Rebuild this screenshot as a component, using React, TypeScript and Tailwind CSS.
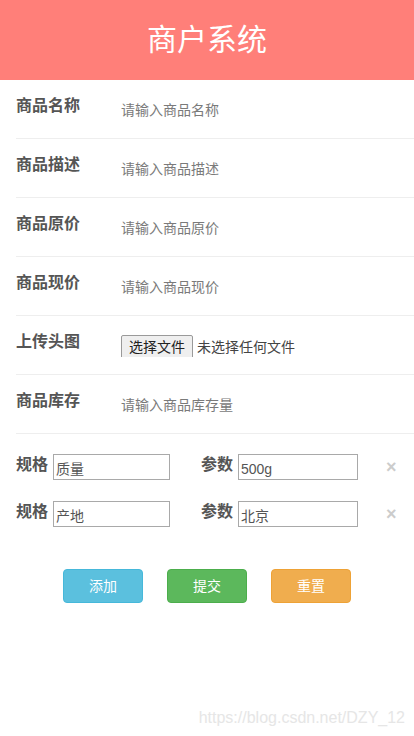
import React from "react";

const font = { fontFamily: '"Liberation Sans", "Noto Sans CJK SC", sans-serif' };

function Row({ label, children }: { label: string; children: React.ReactNode }) {
  return (
    <div className="ml-4 flex h-[59px] items-start border-b border-[#eeeeee] pt-[16px]">
      <div className="w-[105px] text-[16px] font-bold leading-[20px] text-[#555555]">{label}</div>
      {children}
    </div>
  );
}

function Placeholder({ text }: { text: string }) {
  return <div className="mt-[4px] h-[20px] text-[14px] leading-[20px] text-[#7a7a7a]">{text}</div>;
}

function SpecRow({ a, b }: { a: string; b: string }) {
  return (
    <div className="flex h-[47px] items-start pl-4">
      <div className="mt-[1px] w-[37px] text-[16px] font-bold leading-[20px] text-[#555555]">规格</div>
      <div className="h-[26px] w-[117px] border border-[#a9a9a9] pl-[2px] pt-[4px] text-[14px] leading-[20px] text-[#555555]">{a}</div>
      <div className="ml-[31px] mt-[1px] w-[37px] text-[16px] font-bold leading-[20px] text-[#555555]">参数</div>
      <div className="h-[26px] w-[120px] border border-[#a9a9a9] pl-[2px] pt-[4px] text-[14px] leading-[20px] text-[#555555]">{b}</div>
      <div className="ml-[28px] mt-[3px] text-[18px] font-bold leading-[20px] text-[#cccccc]">×</div>
    </div>
  );
}

export default function App() {
  return (
    <div className="relative h-[736px] w-[414px] overflow-hidden bg-white" style={font}>
      <div className="flex h-[80px] items-center justify-center bg-[#ff7f79] text-[30px] leading-[36px] text-white">
        商户系统
      </div>
      <Row label="商品名称"><Placeholder text="请输入商品名称" /></Row>
      <Row label="商品描述"><Placeholder text="请输入商品描述" /></Row>
      <Row label="商品原价"><Placeholder text="请输入商品原价" /></Row>
      <Row label="商品现价"><Placeholder text="请输入商品现价" /></Row>
      <Row label="上传头图">
        <div className="mt-[3px] flex h-[22px] items-start overflow-hidden">
          <div className="h-[26px] w-[72px] rounded-[2px] border border-[#9a9a9a] bg-[#efefef] text-center text-[14px] leading-[22px] text-[#222222]">
            选择文件
          </div>
          <div className="ml-[4px] text-[14px] leading-[24px] text-[#444444]">未选择任何文件</div>
        </div>
      </Row>
      <Row label="商品库存"><Placeholder text="请输入商品库存量" /></Row>
      <div className="pt-[20px]">
        <SpecRow a="质量" b="500g" />
        <SpecRow a="产地" b="北京" />
      </div>
      <div className="mt-[21px] flex justify-center gap-6">
        <div className="flex h-[34px] w-[80px] items-center justify-center rounded-[4px] border border-[#46b8da] bg-[#5bc0de] text-[14px] text-white">添加</div>
        <div className="flex h-[34px] w-[80px] items-center justify-center rounded-[4px] border border-[#4cae4c] bg-[#5cb85c] text-[14px] text-white">提交</div>
        <div className="flex h-[34px] w-[80px] items-center justify-center rounded-[4px] border border-[#eea236] bg-[#f0ad4e] text-[14px] text-white">重置</div>
      </div>
      <div className="absolute right-[9px] top-[707px] text-[16px] leading-[22px] text-[#e6e6e6]">
        https://blog.csdn.net/DZY_12
      </div>
    </div>
  );
}
